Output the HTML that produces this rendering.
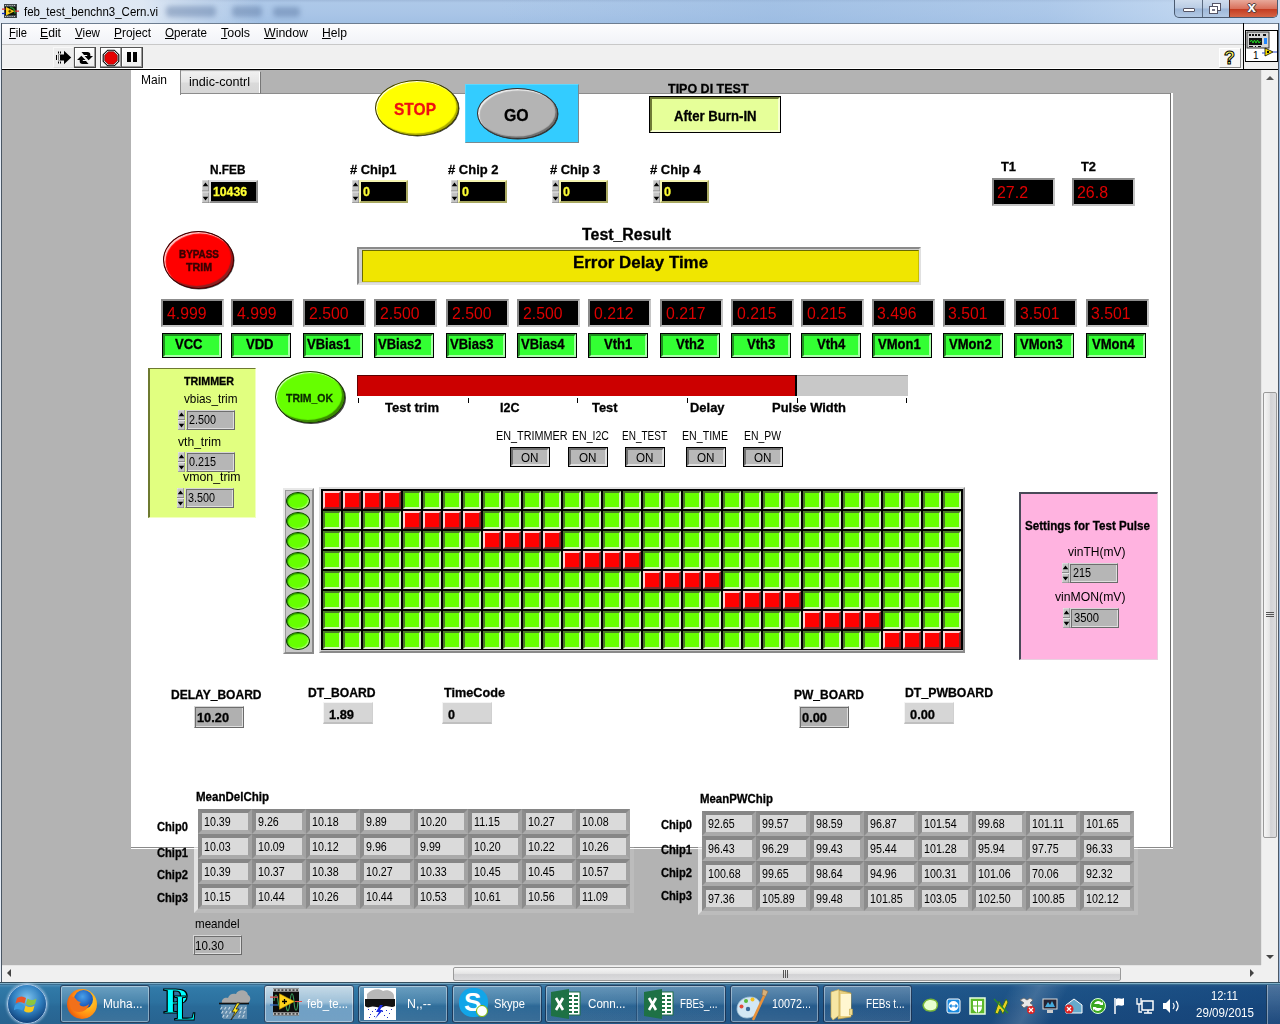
<!DOCTYPE html><html><head><meta charset="utf-8"><title>feb_test_benchn3_Cern.vi</title><style>
*{box-sizing:border-box;margin:0;padding:0}
html,body{width:1280px;height:1024px;overflow:hidden;background:#b3b3b3;font-family:"Liberation Sans",sans-serif;font-size:12px;color:#000}
.a{position:absolute}
.t{position:absolute;white-space:nowrap;line-height:1}
.b{font-weight:bold}
u{text-decoration:underline}
/* labview style frames */
.raised{border:2px solid;border-color:#dcdcdc #8a8a8a #8a8a8a #dcdcdc}
.sunk{border:1px solid;border-color:#d6d6d6 #6a6a6a #6a6a6a #d6d6d6;box-shadow:inset 1px 1px 0 #6e6e6e,inset -1px -1px 0 #dedede}
.spin{background:#c8c8c8;border:1px solid;border-color:#e8e8e8 #7d7d7d #7d7d7d #e8e8e8}
.spin i{position:absolute;left:0;width:100%;height:50%;display:block}
.spin:before{content:"";position:absolute;left:-.5px;top:2px;border:2.500px solid transparent;border-top:0;border-bottom:3.500px solid #000;width:0;height:0}
.spin:after{content:"";position:absolute;left:-.5px;bottom:2px;border:2.500px solid transparent;border-bottom:0;border-top:3.500px solid #000;width:0;height:0}
.spin b{position:absolute;left:0;right:0;top:50%;height:1px;background:#8a8a8a;margin-top:-1px;border-bottom:1px solid #eee;box-sizing:content-box}
.cell{position:absolute;width:18px;height:18px;border:2px solid}
.g{background:#66ff00;border-color:#4a7a2a #d8f0c8 #d8f0c8 #4a7a2a}
.r{background:#ff0000;border-color:#ffd0d0 #7a3030 #7a3030 #ffd0d0}
.led{position:absolute;width:24px;height:18px;border-radius:50%;background:#66ff00;border:1px solid #0a3a00;box-shadow:inset 1px 1px 1px #2c9a00, inset -1px -1px 1px #b8ff80}
.ind{position:absolute;width:63px;height:28px;background:#000;border:2px solid;border-color:#8c8c8c #c4c4c4 #c4c4c4 #8c8c8c;outline:0}
.lab{position:absolute;width:60px;height:25px;background:#33ff33;border:1px solid #000}
.lab:before{content:"";position:absolute;left:0;top:0;right:0;bottom:0;border:2px solid;border-color:#1f8f1f #a8ffa8 #a8ffa8 #1f8f1f}
.on{position:absolute;width:40px;height:20px;background:#b8b8b8;border:1px solid #000}
.on:before{content:"";position:absolute;left:0;top:0;right:0;bottom:0;border:2px solid;border-color:#6e6e6e #e2e2e2 #e2e2e2 #6e6e6e}
.acell{position:absolute;width:54px;height:25px;background:#dadada;border:4px solid;border-color:#868686 #a2a2a2 #aaaaaa #8c8c8c}
</style></head><body>
<div class="a " style="left:0px;top:0px;width:1280px;height:23px;background:linear-gradient(180deg,#9fb9da 0%,#adc8e8 12%,#a9c5e7 60%,#a2c0e4 100%)"></div>
<div class="a " style="left:500px;top:0px;width:780px;height:23px;background:linear-gradient(90deg,rgba(150,182,222,0) 0%,rgba(150,184,224,.45) 35%,rgba(175,203,236,.3) 70%,rgba(214,230,248,.75) 100%)"></div>
<div class="a " style="left:0px;top:0px;width:260px;height:23px;background:linear-gradient(90deg,rgba(226,234,244,1) 0%,rgba(224,233,244,.96) 55%,rgba(215,227,242,.7) 70%,rgba(200,218,240,0) 100%)"></div>
<div class="a " style="left:166px;top:6px;width:50px;height:11px;background:rgba(70,100,145,.38);filter:blur(2.5px);border-radius:4px"></div>
<div class="a " style="left:232px;top:6px;width:30px;height:11px;background:rgba(70,100,145,.38);filter:blur(2.5px);border-radius:4px"></div>
<div class="a " style="left:273px;top:7px;width:27px;height:10px;background:rgba(70,100,145,.38);filter:blur(2.5px);border-radius:4px"></div>
<svg class="a" style="left:1px;top:3px" width="19" height="16" viewBox="0 0 19 16"><rect x="3" y="1" width="13" height="14" fill="#3c4448"/><path d="M4 2.500h11M4 13.500h11" stroke="#c8c8c8" stroke-width="1.200" stroke-dasharray="1.200 1"/><rect x="4" y="4" width="11" height="8" fill="#0c1408"/><path d="M9 4.500c3 0 5 2 5 6" stroke="#2a8a2a" stroke-width="1.400" fill="none"/><path d="M5 4l8.500 4.300L5 12.500z" fill="#ffd21a"/><path d="M7.300 8.200h3M8.800 6.700v3" stroke="#3a3000" stroke-width="1"/><path d="M1 6.200h3.500M14 8.200h4" stroke="#e03030" stroke-width="1.300"/><path d="M1 10.500h3.500" stroke="#1030c0" stroke-width="1.300"/></svg>
<div class="t " style="left:23.7px;top:5.8px;font-size:12px;color:#000;transform:scaleX(0.956);transform-origin:0 0;">feb_test_benchn3_Cern.vi</div>
<div class="a" style="left:1174px;top:0;width:104px;height:18px;border:1px solid #4a5a70;border-top:0;border-radius:0 0 5px 5px;overflow:hidden;background:linear-gradient(180deg,#cfddee 0%,#b9cce4 48%,#9db7d8 52%,#b3c9e4 100%)"><div class="a" style="left:27px;top:0;width:1px;height:18px;background:#5a6a80"></div><div class="a" style="left:54px;top:0;width:49px;height:18px;border-left:1px solid #5a2a20;background:linear-gradient(180deg,#e8a99a 0%,#d9715c 48%,#c43d22 52%,#d86a4a 100%)"></div><div class="a" style="left:8px;top:8px;width:12px;height:4px;background:#fff;border:1px solid #556;border-radius:1px"></div><div class="a" style="left:37px;top:3px;width:9px;height:8px;background:#fff;border:1px solid #556"></div><div class="a" style="left:34px;top:6px;width:9px;height:8px;background:#fff;border:1px solid #556"></div><div class="a" style="left:37px;top:9px;width:3px;height:2px;background:#778"></div><div class="t b" style="left:72.500px;top:-1.500px;font-size:15px;color:#fff;text-shadow:0 0 1px #433,1px 0 0 #544,-1px 0 0 #544,0 1px 0 #544,0 -1px 0 #544">x</div></div>
<div class="a " style="left:0px;top:23px;width:1280px;height:22px;background:linear-gradient(180deg,#fdfdfe 0%,#f1f3f7 100%);border-top:1px solid #6d7d90;border-bottom:1px solid #c8c8c8"></div>
<div class="a " style="left:0px;top:45px;width:1280px;height:24px;background:#f0f0f0"></div>
<div class="a " style="left:0px;top:23px;width:2px;height:960px;background:#e6eef8;border-right:1px solid #4a5663"></div>
<div class="a " style="left:1278px;top:23px;width:2px;height:960px;background:#9db9dc;border-left:1px solid #4c5866"></div>
<div class="t" style="left:9px;top:25.7px;font-size:13px;transform:scaleX(0.859);transform-origin:0 0"><u>F</u>ile</div>
<div class="t" style="left:40px;top:25.7px;font-size:13px;transform:scaleX(0.937);transform-origin:0 0"><u>E</u>dit</div>
<div class="t" style="left:75px;top:25.7px;font-size:13px;transform:scaleX(0.895);transform-origin:0 0"><u>V</u>iew</div>
<div class="t" style="left:114px;top:25.7px;font-size:13px;transform:scaleX(0.914);transform-origin:0 0"><u>P</u>roject</div>
<div class="t" style="left:165px;top:25.7px;font-size:13px;transform:scaleX(0.894);transform-origin:0 0"><u>O</u>perate</div>
<div class="t" style="left:221px;top:25.7px;font-size:13px;transform:scaleX(0.956);transform-origin:0 0"><u>T</u>ools</div>
<div class="t" style="left:264px;top:25.7px;font-size:13px;transform:scaleX(0.952);transform-origin:0 0"><u>W</u>indow</div>
<div class="t" style="left:322px;top:25.7px;font-size:13px;transform:scaleX(0.935);transform-origin:0 0"><u>H</u>elp</div>
<div class="a " style="left:53px;top:47px;width:21px;height:21px;background:#ececec;border:1px solid;border-color:#f8f8f8 #dcdcdc #dcdcdc #f8f8f8"></div>
<svg class="a" style="left:54px;top:48px" width="20" height="20" viewBox="0 0 20 20"><path d="M4.500 6.500h5.500V2.800L17.200 9.500 10 16.200V12.500H4.500z" fill="#000"/><path d="M2.500 7v5M4.500 3.500v2M6.500 3.500v2M4.500 13.500v2M6.500 13.500v2" stroke="#000" stroke-width="1"/><path d="M5.500 6.500v6" stroke="#ececec" stroke-width="1"/></svg>
<div class="a " style="left:74px;top:47px;width:22px;height:21px;background:linear-gradient(180deg,#fdfdfd,#ececec);border:1px solid;border-color:#555 #444 #444 #555;box-shadow:inset -1px -1px 0 #9a9a9a,inset 1px 1px 0 #fff"></div>
<svg class="a" style="left:75px;top:48px" width="20" height="20" viewBox="0 0 20 20"><path d="M6.500 4h6c1.800 0 2.800 1 2.800 2.500V8H18l-4.300 4.300L9.500 8h2.700V7H9z" fill="#000"/><path d="M13.500 16h-6c-1.800 0-2.800-1-2.800-2.500V12H2l4.300-4.300L10.500 12H7.800v1H11z" fill="#000"/></svg>
<div class="a " style="left:100px;top:47px;width:22px;height:21px;background:linear-gradient(180deg,#fdfdfd,#ececec);border:1px solid;border-color:#555 #444 #444 #555;box-shadow:inset -1px -1px 0 #9a9a9a,inset 1px 1px 0 #fff"></div>
<svg class="a" style="left:102px;top:49px" width="18" height="18" viewBox="0 0 18 18"><path d="M5.700 1.200h6.600l4.500 4.500v6.600l-4.500 4.500H5.700l-4.500-4.500V5.700z" fill="#fff" stroke="#000" stroke-width="1.100"/><path d="M6.300 2.700h5.400l3.600 3.600v5.400l-3.600 3.600H6.300l-3.600-3.600V6.300z" fill="#e60000" stroke="#400" stroke-width=".6"/></svg>
<div class="a " style="left:121px;top:47px;width:22px;height:21px;background:linear-gradient(180deg,#fdfdfd,#ececec);border:1px solid;border-color:#555 #444 #444 #555;box-shadow:inset -1px -1px 0 #9a9a9a,inset 1px 1px 0 #fff"></div>
<div class="a " style="left:127px;top:52px;width:3.7px;height:10px;background:#000"></div>
<div class="a " style="left:133.3px;top:52px;width:3.7px;height:10px;background:#000"></div>
<div class="a " style="left:1219px;top:48px;width:22px;height:20px;background:#f6f6f6;border:1px solid;border-color:#fff #8a8a8a #8a8a8a #fff"></div>
<div class="t b" style="left:1224px;top:49px;font-size:18px;color:#ffff66;-webkit-text-stroke:1px #000">?</div>
<div class="a " style="left:1243px;top:23px;width:1px;height:46px;background:#000"></div>
<div class="a " style="left:1245px;top:30px;width:33px;height:32px;background:#fff;border:1px solid #000"></div>
<svg class="a" style="left:1246px;top:31px" width="31" height="30" viewBox="0 0 31 30"><rect x="1" y="1" width="22" height="16" fill="#d4d4d4" stroke="#333" stroke-width="1"/><rect x="3" y="7" width="13" height="7" fill="#111"/><path d="M4 11l1.500-2 1.500 3 1.500-3 1.500 3 1.500-3 1.500 3 1.500-2" stroke="#2d2" stroke-width="1" fill="none"/><path d="M3 4h2M6 4h2M9 4h2M12 4h2M17 4h3" stroke="#111" stroke-width="2"/><path d="M3 15.500h4M9 15.500h1M12 15.500h3" stroke="#111" stroke-width="1"/><rect x="18" y="7" width="3" height="6" fill="#28f"/><path d="M19 17l8 4-8 4z" fill="#ffe600" stroke="#000" stroke-width=".8"/><path d="M16 22h3M27 21h4" stroke="#24c" stroke-width="1"/><circle cx="22" cy="21" r="1.200" fill="#000"/></svg>
<div class="t " style="left:1253.0px;top:50.6px;font-size:10px;color:#000;">1</div>
<div class="a " style="left:2px;top:68px;width:1241px;height:1px;background:#fff"></div>
<div class="a " style="left:2px;top:69px;width:1276px;height:1px;background:#000"></div>
<div class="a " style="left:1170px;top:93px;width:3px;height:756px;background:#fff;border-left:1px solid #707070"></div>
<div class="a " style="left:131px;top:847px;width:1042px;height:2px;background:#fff;border-top:1px solid #8a8a8a"></div>
<div class="a " style="left:131px;top:93px;width:1039px;height:754px;background:#fff;border-top:1px solid #8c8c8c"></div>
<div class="a " style="left:180px;top:71px;width:81px;height:23px;background:linear-gradient(180deg,#f0f0f0 0%,#e6e6e6 45%,#dadada 55%,#d6d6d6 100%);border:1px solid;border-color:#e8e8e8 #777 #8c8c8c #8a8a8a;box-shadow:inset -1px 0 0 #fff"></div>
<div class="a " style="left:131px;top:70px;width:50px;height:25px;background:#fff;border-right:1px solid #8a8a8a"></div>
<div class="t " style="left:140.5px;top:73.6px;font-size:12.5px;color:#000;transform:scaleX(0.960);transform-origin:0 0;">Main</div>
<div class="t " style="left:189.4px;top:75.9px;font-size:12.5px;color:#000;transform:scaleX(1.009);transform-origin:0 0;">indic-contrl</div>
<div class="a" style="left:374.5px;top:80px;width:84px;height:56px;border-radius:50%;background:#ffff00;border:1px solid #3a3a00;box-shadow:inset 1px 1px 1px #fffff0,inset -1.500px -1.500px 1px #a8a800,.5px .5px 0 #444"></div>
<div class="t " style="left:394.4px;top:100.5px;font-size:17px;font-weight:bold;-webkit-text-stroke:.3px;color:#ee1111;transform:scaleX(0.913);transform-origin:0 0;">STOP</div>
<div class="a " style="left:465px;top:84px;width:114px;height:59px;background:#33ccff;border:1px solid;border-color:#5ad8ff #7a8a90 #7a8a90 #5ad8ff"></div>
<div class="a" style="left:476.5px;top:88.3px;width:81px;height:51px;border-radius:50%;background:#b4b4b4;border:1px solid #333;box-shadow:inset 1.500px 1.500px 1px #ececec,inset -1.500px -1.500px 1px #6e6e6e,.5px .5px 0 #333"></div>
<div class="t " style="left:504.4px;top:106.7px;font-size:17px;font-weight:bold;-webkit-text-stroke:.3px;color:#000;transform:scaleX(0.934);transform-origin:0 0;">GO</div>
<div class="t " style="left:668.0px;top:81.6px;font-size:13px;font-weight:bold;-webkit-text-stroke:.3px;color:#000;transform:scaleX(0.961);transform-origin:0 0;">TIPO DI TEST</div>
<div class="a " style="left:649px;top:96px;width:132px;height:37px;background:#e6ff99;border:1px solid #000"></div>
<div class="a " style="left:650px;top:97px;width:130px;height:35px;border:2px solid;border-color:#6e7a36 #f6ffd0 #f6ffd0 #6e7a36"></div>
<div class="t " style="left:673.5px;top:108.7px;font-size:14px;font-weight:bold;-webkit-text-stroke:.3px;color:#000;transform:scaleX(0.939);transform-origin:0 0;">After Burn-IN</div>
<div class="t " style="left:209.5px;top:162.6px;font-size:13px;font-weight:bold;-webkit-text-stroke:.3px;color:#000;transform:scaleX(0.910);transform-origin:0 0;">N.FEB</div>
<svg class="a" style="left:201.5px;top:180px" width="7" height="23" viewBox="0 0 7 23"><rect x="0" y="0" width="7" height="23" fill="#c4c4c4"/><path d="M0 23V0H7" stroke="#ececec" fill="none"/><path d="M7 0V23H0" stroke="#7a7a7a" fill="none"/><path d="M0 11H7" stroke="#8a8a8a" stroke-width="1"/><path d="M0 12H7" stroke="#e8e8e8" stroke-width="1"/><path d="M3.500 2.500L6.300 6.300H0.700z" fill="#000"/><path d="M3.500 20.5L6.300 16.7H0.700z" fill="#000"/></svg>
<div class="a raised" style="left:209px;top:180px;width:49px;height:23px;background:#000;"></div>
<div class="t " style="left:212.5px;top:184.8px;font-size:13px;font-weight:bold;-webkit-text-stroke:.3px;color:#ffff33;transform:scaleX(0.940);transform-origin:0 0;">10436</div>
<div class="t " style="left:349.6px;top:162.6px;font-size:13px;font-weight:bold;-webkit-text-stroke:.3px;color:#000;transform:scaleX(0.990);transform-origin:0 0;"># Chip1</div>
<svg class="a" style="left:351.5px;top:180px" width="7" height="23" viewBox="0 0 7 23"><rect x="0" y="0" width="7" height="23" fill="#c4c4c4"/><path d="M0 23V0H7" stroke="#ececec" fill="none"/><path d="M7 0V23H0" stroke="#7a7a7a" fill="none"/><path d="M0 11H7" stroke="#8a8a8a" stroke-width="1"/><path d="M0 12H7" stroke="#e8e8e8" stroke-width="1"/><path d="M3.500 2.500L6.300 6.300H0.700z" fill="#000"/><path d="M3.500 20.5L6.300 16.7H0.700z" fill="#000"/></svg>
<div class="a raised" style="left:359px;top:180px;width:49px;height:23px;background:#000;border-color:#f4f4b0 #a8a860 #a8a860 #f4f4b0;"></div>
<div class="t " style="left:362.5px;top:184.8px;font-size:13px;font-weight:bold;-webkit-text-stroke:.3px;color:#ffff33;transform:scaleX(0.968);transform-origin:0 0;">0</div>
<div class="t " style="left:448.3px;top:162.6px;font-size:13px;font-weight:bold;-webkit-text-stroke:.3px;color:#000;transform:scaleX(0.999);transform-origin:0 0;"># Chip 2</div>
<svg class="a" style="left:450.5px;top:180px" width="7" height="23" viewBox="0 0 7 23"><rect x="0" y="0" width="7" height="23" fill="#c4c4c4"/><path d="M0 23V0H7" stroke="#ececec" fill="none"/><path d="M7 0V23H0" stroke="#7a7a7a" fill="none"/><path d="M0 11H7" stroke="#8a8a8a" stroke-width="1"/><path d="M0 12H7" stroke="#e8e8e8" stroke-width="1"/><path d="M3.500 2.500L6.300 6.300H0.700z" fill="#000"/><path d="M3.500 20.5L6.300 16.7H0.700z" fill="#000"/></svg>
<div class="a raised" style="left:458px;top:180px;width:49px;height:23px;background:#000;border-color:#f4f4b0 #a8a860 #a8a860 #f4f4b0;"></div>
<div class="t " style="left:461.5px;top:184.8px;font-size:13px;font-weight:bold;-webkit-text-stroke:.3px;color:#ffff33;transform:scaleX(0.968);transform-origin:0 0;">0</div>
<div class="t " style="left:549.6px;top:162.6px;font-size:13px;font-weight:bold;-webkit-text-stroke:.3px;color:#000;transform:scaleX(0.993);transform-origin:0 0;"># Chip 3</div>
<svg class="a" style="left:551.5px;top:180px" width="7" height="23" viewBox="0 0 7 23"><rect x="0" y="0" width="7" height="23" fill="#c4c4c4"/><path d="M0 23V0H7" stroke="#ececec" fill="none"/><path d="M7 0V23H0" stroke="#7a7a7a" fill="none"/><path d="M0 11H7" stroke="#8a8a8a" stroke-width="1"/><path d="M0 12H7" stroke="#e8e8e8" stroke-width="1"/><path d="M3.500 2.500L6.300 6.300H0.700z" fill="#000"/><path d="M3.500 20.5L6.300 16.7H0.700z" fill="#000"/></svg>
<div class="a raised" style="left:559px;top:180px;width:49px;height:23px;background:#000;border-color:#f4f4b0 #a8a860 #a8a860 #f4f4b0;"></div>
<div class="t " style="left:562.5px;top:184.8px;font-size:13px;font-weight:bold;-webkit-text-stroke:.3px;color:#ffff33;transform:scaleX(0.968);transform-origin:0 0;">0</div>
<div class="t " style="left:650.4px;top:162.6px;font-size:13px;font-weight:bold;-webkit-text-stroke:.3px;color:#000;transform:scaleX(1.001);transform-origin:0 0;"># Chip 4</div>
<svg class="a" style="left:652.5px;top:180px" width="7" height="23" viewBox="0 0 7 23"><rect x="0" y="0" width="7" height="23" fill="#c4c4c4"/><path d="M0 23V0H7" stroke="#ececec" fill="none"/><path d="M7 0V23H0" stroke="#7a7a7a" fill="none"/><path d="M0 11H7" stroke="#8a8a8a" stroke-width="1"/><path d="M0 12H7" stroke="#e8e8e8" stroke-width="1"/><path d="M3.500 2.500L6.300 6.300H0.700z" fill="#000"/><path d="M3.500 20.5L6.300 16.7H0.700z" fill="#000"/></svg>
<div class="a raised" style="left:660px;top:180px;width:49px;height:23px;background:#000;border-color:#f4f4b0 #a8a860 #a8a860 #f4f4b0;"></div>
<div class="t " style="left:663.5px;top:184.8px;font-size:13px;font-weight:bold;-webkit-text-stroke:.3px;color:#ffff33;transform:scaleX(0.968);transform-origin:0 0;">0</div>
<div class="t " style="left:1001.0px;top:159.8px;font-size:13px;font-weight:bold;-webkit-text-stroke:.3px;color:#000;transform:scaleX(0.989);transform-origin:0 0;">T1</div>
<div class="t " style="left:1081.0px;top:159.8px;font-size:13px;font-weight:bold;-webkit-text-stroke:.3px;color:#000;transform:scaleX(0.989);transform-origin:0 0;">T2</div>
<div class="a ind" style="left:992px;top:178px;width:63px;height:28px;"></div>
<div class="t " style="left:997.0px;top:184.2px;font-size:17px;color:#e00000;transform:scaleX(0.937);transform-origin:0 0;">27.2</div>
<div class="a ind" style="left:1072px;top:178px;width:63px;height:28px;"></div>
<div class="t " style="left:1077.0px;top:184.2px;font-size:17px;color:#e00000;transform:scaleX(0.937);transform-origin:0 0;">26.8</div>
<div class="a" style="left:163px;top:231px;width:71px;height:58px;border-radius:50%;background:#ff0000;border:1px solid #3a0000;box-shadow:inset 1.500px 1.500px 1px #ffc8c8,inset -2px -2px 1px #8a2020,.5px .5px 0 #555"></div>
<div class="t " style="left:179.0px;top:248.6px;font-size:11px;font-weight:bold;color:#3a0000;transform:scaleX(0.900);transform-origin:0 0;-webkit-text-stroke:.45px #3a0000;">BYPASS</div>
<div class="t " style="left:186.0px;top:261.6px;font-size:11px;font-weight:bold;color:#3a0000;transform:scaleX(0.967);transform-origin:0 0;-webkit-text-stroke:.45px #3a0000;">TRIM</div>
<div class="t " style="left:582.0px;top:226.7px;font-size:16px;font-weight:bold;-webkit-text-stroke:.3px;color:#000;transform:scaleX(0.994);transform-origin:0 0;">Test_Result</div>
<div class="a " style="left:357px;top:247px;width:564px;height:38px;background:#d0d0d0;border:2px solid;border-color:#8a8a8a #e0e0e0 #e0e0e0 #8a8a8a"></div>
<div class="a " style="left:362px;top:249.5px;width:557px;height:32px;background:#f0e600;border:1px solid;border-color:#6a6a00 #c8c000 #c8c000 #6a6a00"></div>
<div class="t " style="left:573.0px;top:254.7px;font-size:16px;font-weight:bold;-webkit-text-stroke:.3px;color:#000;transform:scaleX(1.057);transform-origin:0 0;">Error Delay Time</div>
<div class="ind" style="left:161px;top:299px"></div>
<div class="t " style="left:166.5px;top:304.7px;font-size:17px;color:#dc0000;transform:scaleX(0.928);transform-origin:0 0;">4.999</div>
<div class="lab" style="left:162px;top:333px"></div>
<div class="t " style="left:174.8px;top:336.7px;font-size:14px;font-weight:bold;-webkit-text-stroke:.3px;color:#000;transform:scaleX(0.930);transform-origin:0 0;">VCC</div>
<div class="ind" style="left:231px;top:299px"></div>
<div class="t " style="left:236.5px;top:304.7px;font-size:17px;color:#dc0000;transform:scaleX(0.928);transform-origin:0 0;">4.999</div>
<div class="lab" style="left:231px;top:333px"></div>
<div class="t " style="left:246.3px;top:336.7px;font-size:14px;font-weight:bold;-webkit-text-stroke:.3px;color:#000;transform:scaleX(0.930);transform-origin:0 0;">VDD</div>
<div class="ind" style="left:303px;top:299px"></div>
<div class="t " style="left:308.5px;top:304.7px;font-size:17px;color:#dc0000;transform:scaleX(0.928);transform-origin:0 0;">2.500</div>
<div class="lab" style="left:303px;top:333px"></div>
<div class="t " style="left:306.8px;top:336.7px;font-size:14px;font-weight:bold;-webkit-text-stroke:.3px;color:#000;transform:scaleX(0.930);transform-origin:0 0;">VBias1</div>
<div class="ind" style="left:374px;top:299px"></div>
<div class="t " style="left:379.5px;top:304.7px;font-size:17px;color:#dc0000;transform:scaleX(0.928);transform-origin:0 0;">2.500</div>
<div class="lab" style="left:374px;top:333px"></div>
<div class="t " style="left:377.8px;top:336.7px;font-size:14px;font-weight:bold;-webkit-text-stroke:.3px;color:#000;transform:scaleX(0.930);transform-origin:0 0;">VBias2</div>
<div class="ind" style="left:446px;top:299px"></div>
<div class="t " style="left:451.5px;top:304.7px;font-size:17px;color:#dc0000;transform:scaleX(0.928);transform-origin:0 0;">2.500</div>
<div class="lab" style="left:446px;top:333px"></div>
<div class="t " style="left:449.8px;top:336.7px;font-size:14px;font-weight:bold;-webkit-text-stroke:.3px;color:#000;transform:scaleX(0.930);transform-origin:0 0;">VBias3</div>
<div class="ind" style="left:517px;top:299px"></div>
<div class="t " style="left:522.5px;top:304.7px;font-size:17px;color:#dc0000;transform:scaleX(0.928);transform-origin:0 0;">2.500</div>
<div class="lab" style="left:517px;top:333px"></div>
<div class="t " style="left:520.8px;top:336.7px;font-size:14px;font-weight:bold;-webkit-text-stroke:.3px;color:#000;transform:scaleX(0.930);transform-origin:0 0;">VBias4</div>
<div class="ind" style="left:588px;top:299px"></div>
<div class="t " style="left:593.5px;top:304.7px;font-size:17px;color:#dc0000;transform:scaleX(0.928);transform-origin:0 0;">0.212</div>
<div class="lab" style="left:588px;top:333px"></div>
<div class="t " style="left:604.4px;top:336.7px;font-size:14px;font-weight:bold;-webkit-text-stroke:.3px;color:#000;transform:scaleX(0.930);transform-origin:0 0;">Vth1</div>
<div class="ind" style="left:660px;top:299px"></div>
<div class="t " style="left:665.5px;top:304.7px;font-size:17px;color:#dc0000;transform:scaleX(0.928);transform-origin:0 0;">0.217</div>
<div class="lab" style="left:660px;top:333px"></div>
<div class="t " style="left:676.4px;top:336.7px;font-size:14px;font-weight:bold;-webkit-text-stroke:.3px;color:#000;transform:scaleX(0.930);transform-origin:0 0;">Vth2</div>
<div class="ind" style="left:731px;top:299px"></div>
<div class="t " style="left:736.5px;top:304.7px;font-size:17px;color:#dc0000;transform:scaleX(0.928);transform-origin:0 0;">0.215</div>
<div class="lab" style="left:731px;top:333px"></div>
<div class="t " style="left:747.4px;top:336.7px;font-size:14px;font-weight:bold;-webkit-text-stroke:.3px;color:#000;transform:scaleX(0.930);transform-origin:0 0;">Vth3</div>
<div class="ind" style="left:801px;top:299px"></div>
<div class="t " style="left:806.5px;top:304.7px;font-size:17px;color:#dc0000;transform:scaleX(0.928);transform-origin:0 0;">0.215</div>
<div class="lab" style="left:801px;top:333px"></div>
<div class="t " style="left:817.4px;top:336.7px;font-size:14px;font-weight:bold;-webkit-text-stroke:.3px;color:#000;transform:scaleX(0.930);transform-origin:0 0;">Vth4</div>
<div class="ind" style="left:871.5px;top:299px"></div>
<div class="t " style="left:877.0px;top:304.7px;font-size:17px;color:#dc0000;transform:scaleX(0.928);transform-origin:0 0;">3.496</div>
<div class="lab" style="left:871.5px;top:333px"></div>
<div class="t " style="left:877.7px;top:336.7px;font-size:14px;font-weight:bold;-webkit-text-stroke:.3px;color:#000;transform:scaleX(0.930);transform-origin:0 0;">VMon1</div>
<div class="ind" style="left:942.5px;top:299px"></div>
<div class="t " style="left:948.0px;top:304.7px;font-size:17px;color:#dc0000;transform:scaleX(0.928);transform-origin:0 0;">3.501</div>
<div class="lab" style="left:942.5px;top:333px"></div>
<div class="t " style="left:948.7px;top:336.7px;font-size:14px;font-weight:bold;-webkit-text-stroke:.3px;color:#000;transform:scaleX(0.930);transform-origin:0 0;">VMon2</div>
<div class="ind" style="left:1014px;top:299px"></div>
<div class="t " style="left:1019.5px;top:304.7px;font-size:17px;color:#dc0000;transform:scaleX(0.928);transform-origin:0 0;">3.501</div>
<div class="lab" style="left:1014px;top:333px"></div>
<div class="t " style="left:1020.2px;top:336.7px;font-size:14px;font-weight:bold;-webkit-text-stroke:.3px;color:#000;transform:scaleX(0.930);transform-origin:0 0;">VMon3</div>
<div class="ind" style="left:1085.5px;top:299px"></div>
<div class="t " style="left:1091.0px;top:304.7px;font-size:17px;color:#dc0000;transform:scaleX(0.928);transform-origin:0 0;">3.501</div>
<div class="lab" style="left:1085.5px;top:333px"></div>
<div class="t " style="left:1091.7px;top:336.7px;font-size:14px;font-weight:bold;-webkit-text-stroke:.3px;color:#000;transform:scaleX(0.930);transform-origin:0 0;">VMon4</div>
<div class="a " style="left:148px;top:368px;width:108px;height:150px;background:#e1ff80;border:1px solid;border-color:#6e7a30 #f2ffc0 #f2ffc0 #6e7a30;border-left-width:2px"></div>
<div class="t " style="left:184.0px;top:375.6px;font-size:11px;font-weight:bold;-webkit-text-stroke:.3px;color:#000;transform:scaleX(0.974);transform-origin:0 0;">TRIMMER</div>
<div class="t " style="left:184.0px;top:392.0px;font-size:13px;color:#000;transform:scaleX(0.903);transform-origin:0 0;">vbias_trim</div>
<svg class="a" style="left:178px;top:409.5px" width="7" height="20" viewBox="0 0 7 20"><rect x="0" y="0" width="7" height="20" fill="#c4c4c4"/><path d="M0 20V0H7" stroke="#ececec" fill="none"/><path d="M7 0V20H0" stroke="#7a7a7a" fill="none"/><path d="M0 9.5H7" stroke="#8a8a8a" stroke-width="1"/><path d="M0 10.5H7" stroke="#e8e8e8" stroke-width="1"/><path d="M3.500 2.500L6.300 6.300H0.700z" fill="#000"/><path d="M3.500 17.5L6.300 13.7H0.700z" fill="#000"/></svg>
<div class="a sunk" style="left:185.5px;top:409.5px;width:49px;height:20px;background:#b6b6b6;"></div>
<div class="t " style="left:189.0px;top:412.8px;font-size:13px;color:#000;transform:scaleX(0.830);transform-origin:0 0;">2.500</div>
<div class="t " style="left:177.5px;top:434.5px;font-size:13px;color:#000;transform:scaleX(0.930);transform-origin:0 0;">vth_trim</div>
<svg class="a" style="left:178px;top:451.5px" width="7" height="20" viewBox="0 0 7 20"><rect x="0" y="0" width="7" height="20" fill="#c4c4c4"/><path d="M0 20V0H7" stroke="#ececec" fill="none"/><path d="M7 0V20H0" stroke="#7a7a7a" fill="none"/><path d="M0 9.5H7" stroke="#8a8a8a" stroke-width="1"/><path d="M0 10.5H7" stroke="#e8e8e8" stroke-width="1"/><path d="M3.500 2.500L6.300 6.300H0.700z" fill="#000"/><path d="M3.500 17.5L6.300 13.7H0.700z" fill="#000"/></svg>
<div class="a sunk" style="left:185.5px;top:451.5px;width:49px;height:20px;background:#b6b6b6;"></div>
<div class="t " style="left:189.0px;top:454.8px;font-size:13px;color:#000;transform:scaleX(0.830);transform-origin:0 0;">0.215</div>
<div class="t " style="left:183.0px;top:469.5px;font-size:13px;color:#000;transform:scaleX(0.948);transform-origin:0 0;">vmon_trim</div>
<svg class="a" style="left:177px;top:487.5px" width="7" height="20" viewBox="0 0 7 20"><rect x="0" y="0" width="7" height="20" fill="#c4c4c4"/><path d="M0 20V0H7" stroke="#ececec" fill="none"/><path d="M7 0V20H0" stroke="#7a7a7a" fill="none"/><path d="M0 9.5H7" stroke="#8a8a8a" stroke-width="1"/><path d="M0 10.5H7" stroke="#e8e8e8" stroke-width="1"/><path d="M3.500 2.500L6.300 6.300H0.700z" fill="#000"/><path d="M3.500 17.5L6.300 13.7H0.700z" fill="#000"/></svg>
<div class="a sunk" style="left:184.5px;top:487.5px;width:49px;height:20px;background:#b6b6b6;"></div>
<div class="t " style="left:188.0px;top:490.8px;font-size:13px;color:#000;transform:scaleX(0.830);transform-origin:0 0;">3.500</div>
<div class="a" style="left:275px;top:371px;width:70px;height:52px;border-radius:50%;background:#66ff00;border:1px solid #1a3a00;box-shadow:inset 1px 1px 1px #d8ffc0,inset -2px -2px 1px #3a8a00,1px 1px 0 #444"></div>
<div class="t " style="left:286.0px;top:392.6px;font-size:11px;font-weight:bold;-webkit-text-stroke:.3px;color:#0a2a00;transform:scaleX(0.949);transform-origin:0 0;">TRIM_OK</div>
<div class="a " style="left:357px;top:375px;width:551px;height:21px;background:#c8c8c8;border-top:1px solid #9a9a9a"></div>
<div class="a " style="left:357px;top:375px;width:439px;height:21px;background:#cc0000;border-top:1px solid #5a0000;border-left:1px solid #6a0000"></div>
<div class="a " style="left:795px;top:375px;width:2px;height:21px;background:#000"></div>
<div class="a " style="left:358px;top:398px;width:1px;height:5px;background:#000"></div>
<div class="a " style="left:468px;top:398px;width:1px;height:5px;background:#000"></div>
<div class="a " style="left:577px;top:398px;width:1px;height:5px;background:#000"></div>
<div class="a " style="left:687px;top:398px;width:1px;height:5px;background:#000"></div>
<div class="a " style="left:797px;top:398px;width:1px;height:5px;background:#000"></div>
<div class="a " style="left:906px;top:398px;width:1px;height:5px;background:#000"></div>
<div class="t " style="left:385.0px;top:401.1px;font-size:13px;font-weight:bold;-webkit-text-stroke:.3px;color:#000;transform:scaleX(1.001);transform-origin:0 0;">Test trim</div>
<div class="t " style="left:499.5px;top:401.1px;font-size:13px;font-weight:bold;-webkit-text-stroke:.3px;color:#000;transform:scaleX(0.964);transform-origin:0 0;">I2C</div>
<div class="t " style="left:591.7px;top:401.1px;font-size:13px;font-weight:bold;-webkit-text-stroke:.3px;color:#000;transform:scaleX(0.990);transform-origin:0 0;">Test</div>
<div class="t " style="left:689.7px;top:401.1px;font-size:13px;font-weight:bold;-webkit-text-stroke:.3px;color:#000;transform:scaleX(0.995);transform-origin:0 0;">Delay</div>
<div class="t " style="left:772.0px;top:401.1px;font-size:13px;font-weight:bold;-webkit-text-stroke:.3px;color:#000;transform:scaleX(0.996);transform-origin:0 0;">Pulse Width</div>
<div class="t " style="left:496.0px;top:429.9px;font-size:12.5px;color:#000;transform:scaleX(0.865);transform-origin:0 0;">EN_TRIMMER</div>
<div class="on" style="left:510px;top:447px"></div>
<div class="t " style="left:520.6px;top:452.3px;font-size:12.5px;color:#000;transform:scaleX(0.933);transform-origin:0 0;">ON</div>
<div class="t " style="left:572.0px;top:429.9px;font-size:12.5px;color:#000;transform:scaleX(0.845);transform-origin:0 0;">EN_I2C</div>
<div class="on" style="left:568px;top:447px"></div>
<div class="t " style="left:578.6px;top:452.3px;font-size:12.5px;color:#000;transform:scaleX(0.933);transform-origin:0 0;">ON</div>
<div class="t " style="left:621.6px;top:429.9px;font-size:12.5px;color:#000;transform:scaleX(0.800);transform-origin:0 0;">EN_TEST</div>
<div class="on" style="left:625px;top:447px"></div>
<div class="t " style="left:635.6px;top:452.3px;font-size:12.5px;color:#000;transform:scaleX(0.933);transform-origin:0 0;">ON</div>
<div class="t " style="left:682.0px;top:429.9px;font-size:12.5px;color:#000;transform:scaleX(0.849);transform-origin:0 0;">EN_TIME</div>
<div class="on" style="left:686px;top:447px"></div>
<div class="t " style="left:696.6px;top:452.3px;font-size:12.5px;color:#000;transform:scaleX(0.933);transform-origin:0 0;">ON</div>
<div class="t " style="left:743.7px;top:429.9px;font-size:12.5px;color:#000;transform:scaleX(0.832);transform-origin:0 0;">EN_PW</div>
<div class="on" style="left:743px;top:447px"></div>
<div class="t " style="left:753.6px;top:452.3px;font-size:12.5px;color:#000;transform:scaleX(0.933);transform-origin:0 0;">ON</div>
<div class="a " style="left:283px;top:488px;width:31px;height:166px;background:#c8c8c8;border:2px solid;border-color:#e8e8e8 #8a8a8a #8a8a8a #e8e8e8;box-shadow:inset 1px 1px 0 #9a9a9a"></div>
<div class="led" style="left:286px;top:492px"></div>
<div class="led" style="left:286px;top:512px"></div>
<div class="led" style="left:286px;top:532px"></div>
<div class="led" style="left:286px;top:552px"></div>
<div class="led" style="left:286px;top:572px"></div>
<div class="led" style="left:286px;top:592px"></div>
<div class="led" style="left:286px;top:612px"></div>
<div class="led" style="left:286px;top:632px"></div>
<div class="a " style="left:319px;top:487px;width:646px;height:166px;background:#c8c8c8;border:2px solid;border-color:#e0e0e0 #8a8a8a #8a8a8a #e0e0e0"></div>
<div class="a " style="left:321px;top:489px;width:642px;height:161px;background:#000"></div>
<i class="cell r" style="left:323px;top:491px"></i><i class="cell r" style="left:343px;top:491px"></i><i class="cell r" style="left:363px;top:491px"></i><i class="cell r" style="left:383px;top:491px"></i><i class="cell g" style="left:403px;top:491px"></i><i class="cell g" style="left:423px;top:491px"></i><i class="cell g" style="left:443px;top:491px"></i><i class="cell g" style="left:463px;top:491px"></i><i class="cell g" style="left:483px;top:491px"></i><i class="cell g" style="left:503px;top:491px"></i><i class="cell g" style="left:523px;top:491px"></i><i class="cell g" style="left:543px;top:491px"></i><i class="cell g" style="left:563px;top:491px"></i><i class="cell g" style="left:583px;top:491px"></i><i class="cell g" style="left:603px;top:491px"></i><i class="cell g" style="left:623px;top:491px"></i><i class="cell g" style="left:643px;top:491px"></i><i class="cell g" style="left:663px;top:491px"></i><i class="cell g" style="left:683px;top:491px"></i><i class="cell g" style="left:703px;top:491px"></i><i class="cell g" style="left:723px;top:491px"></i><i class="cell g" style="left:743px;top:491px"></i><i class="cell g" style="left:763px;top:491px"></i><i class="cell g" style="left:783px;top:491px"></i><i class="cell g" style="left:803px;top:491px"></i><i class="cell g" style="left:823px;top:491px"></i><i class="cell g" style="left:843px;top:491px"></i><i class="cell g" style="left:863px;top:491px"></i><i class="cell g" style="left:883px;top:491px"></i><i class="cell g" style="left:903px;top:491px"></i><i class="cell g" style="left:923px;top:491px"></i><i class="cell g" style="left:943px;top:491px"></i>
<i class="cell g" style="left:323px;top:511px"></i><i class="cell g" style="left:343px;top:511px"></i><i class="cell g" style="left:363px;top:511px"></i><i class="cell g" style="left:383px;top:511px"></i><i class="cell r" style="left:403px;top:511px"></i><i class="cell r" style="left:423px;top:511px"></i><i class="cell r" style="left:443px;top:511px"></i><i class="cell r" style="left:463px;top:511px"></i><i class="cell g" style="left:483px;top:511px"></i><i class="cell g" style="left:503px;top:511px"></i><i class="cell g" style="left:523px;top:511px"></i><i class="cell g" style="left:543px;top:511px"></i><i class="cell g" style="left:563px;top:511px"></i><i class="cell g" style="left:583px;top:511px"></i><i class="cell g" style="left:603px;top:511px"></i><i class="cell g" style="left:623px;top:511px"></i><i class="cell g" style="left:643px;top:511px"></i><i class="cell g" style="left:663px;top:511px"></i><i class="cell g" style="left:683px;top:511px"></i><i class="cell g" style="left:703px;top:511px"></i><i class="cell g" style="left:723px;top:511px"></i><i class="cell g" style="left:743px;top:511px"></i><i class="cell g" style="left:763px;top:511px"></i><i class="cell g" style="left:783px;top:511px"></i><i class="cell g" style="left:803px;top:511px"></i><i class="cell g" style="left:823px;top:511px"></i><i class="cell g" style="left:843px;top:511px"></i><i class="cell g" style="left:863px;top:511px"></i><i class="cell g" style="left:883px;top:511px"></i><i class="cell g" style="left:903px;top:511px"></i><i class="cell g" style="left:923px;top:511px"></i><i class="cell g" style="left:943px;top:511px"></i>
<i class="cell g" style="left:323px;top:531px"></i><i class="cell g" style="left:343px;top:531px"></i><i class="cell g" style="left:363px;top:531px"></i><i class="cell g" style="left:383px;top:531px"></i><i class="cell g" style="left:403px;top:531px"></i><i class="cell g" style="left:423px;top:531px"></i><i class="cell g" style="left:443px;top:531px"></i><i class="cell g" style="left:463px;top:531px"></i><i class="cell r" style="left:483px;top:531px"></i><i class="cell r" style="left:503px;top:531px"></i><i class="cell r" style="left:523px;top:531px"></i><i class="cell r" style="left:543px;top:531px"></i><i class="cell g" style="left:563px;top:531px"></i><i class="cell g" style="left:583px;top:531px"></i><i class="cell g" style="left:603px;top:531px"></i><i class="cell g" style="left:623px;top:531px"></i><i class="cell g" style="left:643px;top:531px"></i><i class="cell g" style="left:663px;top:531px"></i><i class="cell g" style="left:683px;top:531px"></i><i class="cell g" style="left:703px;top:531px"></i><i class="cell g" style="left:723px;top:531px"></i><i class="cell g" style="left:743px;top:531px"></i><i class="cell g" style="left:763px;top:531px"></i><i class="cell g" style="left:783px;top:531px"></i><i class="cell g" style="left:803px;top:531px"></i><i class="cell g" style="left:823px;top:531px"></i><i class="cell g" style="left:843px;top:531px"></i><i class="cell g" style="left:863px;top:531px"></i><i class="cell g" style="left:883px;top:531px"></i><i class="cell g" style="left:903px;top:531px"></i><i class="cell g" style="left:923px;top:531px"></i><i class="cell g" style="left:943px;top:531px"></i>
<i class="cell g" style="left:323px;top:551px"></i><i class="cell g" style="left:343px;top:551px"></i><i class="cell g" style="left:363px;top:551px"></i><i class="cell g" style="left:383px;top:551px"></i><i class="cell g" style="left:403px;top:551px"></i><i class="cell g" style="left:423px;top:551px"></i><i class="cell g" style="left:443px;top:551px"></i><i class="cell g" style="left:463px;top:551px"></i><i class="cell g" style="left:483px;top:551px"></i><i class="cell g" style="left:503px;top:551px"></i><i class="cell g" style="left:523px;top:551px"></i><i class="cell g" style="left:543px;top:551px"></i><i class="cell r" style="left:563px;top:551px"></i><i class="cell r" style="left:583px;top:551px"></i><i class="cell r" style="left:603px;top:551px"></i><i class="cell r" style="left:623px;top:551px"></i><i class="cell g" style="left:643px;top:551px"></i><i class="cell g" style="left:663px;top:551px"></i><i class="cell g" style="left:683px;top:551px"></i><i class="cell g" style="left:703px;top:551px"></i><i class="cell g" style="left:723px;top:551px"></i><i class="cell g" style="left:743px;top:551px"></i><i class="cell g" style="left:763px;top:551px"></i><i class="cell g" style="left:783px;top:551px"></i><i class="cell g" style="left:803px;top:551px"></i><i class="cell g" style="left:823px;top:551px"></i><i class="cell g" style="left:843px;top:551px"></i><i class="cell g" style="left:863px;top:551px"></i><i class="cell g" style="left:883px;top:551px"></i><i class="cell g" style="left:903px;top:551px"></i><i class="cell g" style="left:923px;top:551px"></i><i class="cell g" style="left:943px;top:551px"></i>
<i class="cell g" style="left:323px;top:571px"></i><i class="cell g" style="left:343px;top:571px"></i><i class="cell g" style="left:363px;top:571px"></i><i class="cell g" style="left:383px;top:571px"></i><i class="cell g" style="left:403px;top:571px"></i><i class="cell g" style="left:423px;top:571px"></i><i class="cell g" style="left:443px;top:571px"></i><i class="cell g" style="left:463px;top:571px"></i><i class="cell g" style="left:483px;top:571px"></i><i class="cell g" style="left:503px;top:571px"></i><i class="cell g" style="left:523px;top:571px"></i><i class="cell g" style="left:543px;top:571px"></i><i class="cell g" style="left:563px;top:571px"></i><i class="cell g" style="left:583px;top:571px"></i><i class="cell g" style="left:603px;top:571px"></i><i class="cell g" style="left:623px;top:571px"></i><i class="cell r" style="left:643px;top:571px"></i><i class="cell r" style="left:663px;top:571px"></i><i class="cell r" style="left:683px;top:571px"></i><i class="cell r" style="left:703px;top:571px"></i><i class="cell g" style="left:723px;top:571px"></i><i class="cell g" style="left:743px;top:571px"></i><i class="cell g" style="left:763px;top:571px"></i><i class="cell g" style="left:783px;top:571px"></i><i class="cell g" style="left:803px;top:571px"></i><i class="cell g" style="left:823px;top:571px"></i><i class="cell g" style="left:843px;top:571px"></i><i class="cell g" style="left:863px;top:571px"></i><i class="cell g" style="left:883px;top:571px"></i><i class="cell g" style="left:903px;top:571px"></i><i class="cell g" style="left:923px;top:571px"></i><i class="cell g" style="left:943px;top:571px"></i>
<i class="cell g" style="left:323px;top:591px"></i><i class="cell g" style="left:343px;top:591px"></i><i class="cell g" style="left:363px;top:591px"></i><i class="cell g" style="left:383px;top:591px"></i><i class="cell g" style="left:403px;top:591px"></i><i class="cell g" style="left:423px;top:591px"></i><i class="cell g" style="left:443px;top:591px"></i><i class="cell g" style="left:463px;top:591px"></i><i class="cell g" style="left:483px;top:591px"></i><i class="cell g" style="left:503px;top:591px"></i><i class="cell g" style="left:523px;top:591px"></i><i class="cell g" style="left:543px;top:591px"></i><i class="cell g" style="left:563px;top:591px"></i><i class="cell g" style="left:583px;top:591px"></i><i class="cell g" style="left:603px;top:591px"></i><i class="cell g" style="left:623px;top:591px"></i><i class="cell g" style="left:643px;top:591px"></i><i class="cell g" style="left:663px;top:591px"></i><i class="cell g" style="left:683px;top:591px"></i><i class="cell g" style="left:703px;top:591px"></i><i class="cell r" style="left:723px;top:591px"></i><i class="cell r" style="left:743px;top:591px"></i><i class="cell r" style="left:763px;top:591px"></i><i class="cell r" style="left:783px;top:591px"></i><i class="cell g" style="left:803px;top:591px"></i><i class="cell g" style="left:823px;top:591px"></i><i class="cell g" style="left:843px;top:591px"></i><i class="cell g" style="left:863px;top:591px"></i><i class="cell g" style="left:883px;top:591px"></i><i class="cell g" style="left:903px;top:591px"></i><i class="cell g" style="left:923px;top:591px"></i><i class="cell g" style="left:943px;top:591px"></i>
<i class="cell g" style="left:323px;top:611px"></i><i class="cell g" style="left:343px;top:611px"></i><i class="cell g" style="left:363px;top:611px"></i><i class="cell g" style="left:383px;top:611px"></i><i class="cell g" style="left:403px;top:611px"></i><i class="cell g" style="left:423px;top:611px"></i><i class="cell g" style="left:443px;top:611px"></i><i class="cell g" style="left:463px;top:611px"></i><i class="cell g" style="left:483px;top:611px"></i><i class="cell g" style="left:503px;top:611px"></i><i class="cell g" style="left:523px;top:611px"></i><i class="cell g" style="left:543px;top:611px"></i><i class="cell g" style="left:563px;top:611px"></i><i class="cell g" style="left:583px;top:611px"></i><i class="cell g" style="left:603px;top:611px"></i><i class="cell g" style="left:623px;top:611px"></i><i class="cell g" style="left:643px;top:611px"></i><i class="cell g" style="left:663px;top:611px"></i><i class="cell g" style="left:683px;top:611px"></i><i class="cell g" style="left:703px;top:611px"></i><i class="cell g" style="left:723px;top:611px"></i><i class="cell g" style="left:743px;top:611px"></i><i class="cell g" style="left:763px;top:611px"></i><i class="cell g" style="left:783px;top:611px"></i><i class="cell r" style="left:803px;top:611px"></i><i class="cell r" style="left:823px;top:611px"></i><i class="cell r" style="left:843px;top:611px"></i><i class="cell r" style="left:863px;top:611px"></i><i class="cell g" style="left:883px;top:611px"></i><i class="cell g" style="left:903px;top:611px"></i><i class="cell g" style="left:923px;top:611px"></i><i class="cell g" style="left:943px;top:611px"></i>
<i class="cell g" style="left:323px;top:631px"></i><i class="cell g" style="left:343px;top:631px"></i><i class="cell g" style="left:363px;top:631px"></i><i class="cell g" style="left:383px;top:631px"></i><i class="cell g" style="left:403px;top:631px"></i><i class="cell g" style="left:423px;top:631px"></i><i class="cell g" style="left:443px;top:631px"></i><i class="cell g" style="left:463px;top:631px"></i><i class="cell g" style="left:483px;top:631px"></i><i class="cell g" style="left:503px;top:631px"></i><i class="cell g" style="left:523px;top:631px"></i><i class="cell g" style="left:543px;top:631px"></i><i class="cell g" style="left:563px;top:631px"></i><i class="cell g" style="left:583px;top:631px"></i><i class="cell g" style="left:603px;top:631px"></i><i class="cell g" style="left:623px;top:631px"></i><i class="cell g" style="left:643px;top:631px"></i><i class="cell g" style="left:663px;top:631px"></i><i class="cell g" style="left:683px;top:631px"></i><i class="cell g" style="left:703px;top:631px"></i><i class="cell g" style="left:723px;top:631px"></i><i class="cell g" style="left:743px;top:631px"></i><i class="cell g" style="left:763px;top:631px"></i><i class="cell g" style="left:783px;top:631px"></i><i class="cell g" style="left:803px;top:631px"></i><i class="cell g" style="left:823px;top:631px"></i><i class="cell g" style="left:843px;top:631px"></i><i class="cell g" style="left:863px;top:631px"></i><i class="cell r" style="left:883px;top:631px"></i><i class="cell r" style="left:903px;top:631px"></i><i class="cell r" style="left:923px;top:631px"></i><i class="cell r" style="left:943px;top:631px"></i>
<div class="a " style="left:1019px;top:492px;width:139px;height:168px;background:#ffb3e0;border:1px solid;border-color:#4a4a58 #e8d0e0 #e8d0e0 #4a4a58;border-left-width:2px;border-top-width:2px"></div>
<div class="t " style="left:1025.0px;top:519.9px;font-size:12.5px;font-weight:bold;-webkit-text-stroke:.3px;color:#000;transform:scaleX(0.929);transform-origin:0 0;">Settings for Test Pulse</div>
<div class="t " style="left:1068.0px;top:544.9px;font-size:13px;color:#000;transform:scaleX(0.926);transform-origin:0 0;">vinTH(mV)</div>
<svg class="a" style="left:1061.5px;top:562.5px" width="7" height="20" viewBox="0 0 7 20"><rect x="0" y="0" width="7" height="20" fill="#c4c4c4"/><path d="M0 20V0H7" stroke="#ececec" fill="none"/><path d="M7 0V20H0" stroke="#7a7a7a" fill="none"/><path d="M0 9.5H7" stroke="#8a8a8a" stroke-width="1"/><path d="M0 10.5H7" stroke="#e8e8e8" stroke-width="1"/><path d="M3.500 2.500L6.300 6.300H0.700z" fill="#000"/><path d="M3.500 17.5L6.300 13.7H0.700z" fill="#000"/></svg>
<div class="a sunk" style="left:1069px;top:562.5px;width:49px;height:20px;background:#b6b6b6;"></div>
<div class="t " style="left:1072.5px;top:565.8px;font-size:13px;color:#000;transform:scaleX(0.830);transform-origin:0 0;">215</div>
<div class="t " style="left:1055.0px;top:589.9px;font-size:13px;color:#000;transform:scaleX(0.939);transform-origin:0 0;">vinMON(mV)</div>
<svg class="a" style="left:1062.5px;top:608px" width="7" height="20" viewBox="0 0 7 20"><rect x="0" y="0" width="7" height="20" fill="#c4c4c4"/><path d="M0 20V0H7" stroke="#ececec" fill="none"/><path d="M7 0V20H0" stroke="#7a7a7a" fill="none"/><path d="M0 9.5H7" stroke="#8a8a8a" stroke-width="1"/><path d="M0 10.5H7" stroke="#e8e8e8" stroke-width="1"/><path d="M3.500 2.500L6.300 6.300H0.700z" fill="#000"/><path d="M3.500 17.5L6.300 13.7H0.700z" fill="#000"/></svg>
<div class="a sunk" style="left:1070px;top:608px;width:49px;height:20px;background:#b6b6b6;"></div>
<div class="t " style="left:1073.5px;top:611.3px;font-size:13px;color:#000;transform:scaleX(0.864);transform-origin:0 0;">3500</div>
<div class="t " style="left:171.0px;top:687.6px;font-size:13px;font-weight:bold;-webkit-text-stroke:.3px;color:#000;transform:scaleX(0.926);transform-origin:0 0;">DELAY_BOARD</div>
<div class="a sunk" style="left:194px;top:705.5px;width:50px;height:22px;background:#b0b0b0"></div>
<div class="t " style="left:197.0px;top:711.1px;font-size:13px;font-weight:bold;-webkit-text-stroke:.3px;color:#000;transform:scaleX(0.984);transform-origin:0 0;">10.20</div>
<div class="t " style="left:793.5px;top:687.6px;font-size:13px;font-weight:bold;-webkit-text-stroke:.3px;color:#000;transform:scaleX(0.923);transform-origin:0 0;">PW_BOARD</div>
<div class="a sunk" style="left:799px;top:705.5px;width:50px;height:22px;background:#b0b0b0"></div>
<div class="t " style="left:802.0px;top:711.1px;font-size:13px;font-weight:bold;-webkit-text-stroke:.3px;color:#000;transform:scaleX(0.988);transform-origin:0 0;">0.00</div>
<div class="t " style="left:308.0px;top:686.1px;font-size:13px;font-weight:bold;-webkit-text-stroke:.3px;color:#000;transform:scaleX(0.935);transform-origin:0 0;">DT_BOARD</div>
<div class="a " style="left:323px;top:702px;width:50px;height:22px;background:#d6d6d6;border:1px solid;border-color:#f4f4f4 #d0d0d0 #c0c0c0 #f4f4f4;border-bottom-width:2px"></div>
<div class="t " style="left:329.0px;top:708.1px;font-size:13px;font-weight:bold;-webkit-text-stroke:.3px;color:#000;transform:scaleX(0.988);transform-origin:0 0;">1.89</div>
<div class="t " style="left:443.7px;top:686.1px;font-size:13px;font-weight:bold;-webkit-text-stroke:.3px;color:#000;transform:scaleX(0.974);transform-origin:0 0;">TimeCode</div>
<div class="a " style="left:442px;top:702px;width:50px;height:22px;background:#d6d6d6;border:1px solid;border-color:#f4f4f4 #d0d0d0 #c0c0c0 #f4f4f4;border-bottom-width:2px"></div>
<div class="t " style="left:448.0px;top:708.1px;font-size:13px;font-weight:bold;-webkit-text-stroke:.3px;color:#000;transform:scaleX(0.968);transform-origin:0 0;">0</div>
<div class="t " style="left:904.7px;top:685.6px;font-size:13px;font-weight:bold;-webkit-text-stroke:.3px;color:#000;transform:scaleX(0.945);transform-origin:0 0;">DT_PWBOARD</div>
<div class="a " style="left:904px;top:702px;width:50px;height:22px;background:#d6d6d6;border:1px solid;border-color:#f4f4f4 #d0d0d0 #c0c0c0 #f4f4f4;border-bottom-width:2px"></div>
<div class="t " style="left:910.0px;top:708.1px;font-size:13px;font-weight:bold;-webkit-text-stroke:.3px;color:#000;transform:scaleX(0.988);transform-origin:0 0;">0.00</div>
<div class="t " style="left:195.7px;top:790.6px;font-size:12.5px;font-weight:bold;-webkit-text-stroke:.3px;color:#000;transform:scaleX(0.922);transform-origin:0 0;">MeanDelChip</div>
<div class="a " style="left:194px;top:805px;width:440px;height:108px;background:#999;background-clip:padding-box;border:4px solid;border-color:rgba(255,255,255,.62) rgba(255,255,255,.12) rgba(255,255,255,.12) rgba(255,255,255,.62)"></div>
<div class="t " style="left:157.0px;top:820.3px;font-size:13px;font-weight:bold;-webkit-text-stroke:.3px;color:#000;transform:scaleX(0.858);transform-origin:0 0;">Chip0</div>
<i class="acell" style="left:198px;top:809px"></i>
<div class="t " style="left:203.7px;top:815.5px;font-size:12px;color:#000;transform:scaleX(0.890);transform-origin:0 0;">10.39</div>
<i class="acell" style="left:252px;top:809px"></i>
<div class="t " style="left:257.7px;top:815.5px;font-size:12px;color:#000;transform:scaleX(0.890);transform-origin:0 0;">9.26</div>
<i class="acell" style="left:306px;top:809px"></i>
<div class="t " style="left:311.7px;top:815.5px;font-size:12px;color:#000;transform:scaleX(0.890);transform-origin:0 0;">10.18</div>
<i class="acell" style="left:360px;top:809px"></i>
<div class="t " style="left:365.7px;top:815.5px;font-size:12px;color:#000;transform:scaleX(0.890);transform-origin:0 0;">9.89</div>
<i class="acell" style="left:414px;top:809px"></i>
<div class="t " style="left:419.7px;top:815.5px;font-size:12px;color:#000;transform:scaleX(0.890);transform-origin:0 0;">10.20</div>
<i class="acell" style="left:468px;top:809px"></i>
<div class="t " style="left:473.7px;top:815.5px;font-size:12px;color:#000;transform:scaleX(0.890);transform-origin:0 0;">11.15</div>
<i class="acell" style="left:522px;top:809px"></i>
<div class="t " style="left:527.7px;top:815.5px;font-size:12px;color:#000;transform:scaleX(0.890);transform-origin:0 0;">10.27</div>
<i class="acell" style="left:576px;top:809px"></i>
<div class="t " style="left:581.7px;top:815.5px;font-size:12px;color:#000;transform:scaleX(0.890);transform-origin:0 0;">10.08</div>
<div class="t " style="left:157.0px;top:845.6px;font-size:13px;font-weight:bold;-webkit-text-stroke:.3px;color:#000;transform:scaleX(0.858);transform-origin:0 0;">Chip1</div>
<i class="acell" style="left:198px;top:834px"></i>
<div class="t " style="left:203.7px;top:840.5px;font-size:12px;color:#000;transform:scaleX(0.890);transform-origin:0 0;">10.03</div>
<i class="acell" style="left:252px;top:834px"></i>
<div class="t " style="left:257.7px;top:840.5px;font-size:12px;color:#000;transform:scaleX(0.890);transform-origin:0 0;">10.09</div>
<i class="acell" style="left:306px;top:834px"></i>
<div class="t " style="left:311.7px;top:840.5px;font-size:12px;color:#000;transform:scaleX(0.890);transform-origin:0 0;">10.12</div>
<i class="acell" style="left:360px;top:834px"></i>
<div class="t " style="left:365.7px;top:840.5px;font-size:12px;color:#000;transform:scaleX(0.890);transform-origin:0 0;">9.96</div>
<i class="acell" style="left:414px;top:834px"></i>
<div class="t " style="left:419.7px;top:840.5px;font-size:12px;color:#000;transform:scaleX(0.890);transform-origin:0 0;">9.99</div>
<i class="acell" style="left:468px;top:834px"></i>
<div class="t " style="left:473.7px;top:840.5px;font-size:12px;color:#000;transform:scaleX(0.890);transform-origin:0 0;">10.20</div>
<i class="acell" style="left:522px;top:834px"></i>
<div class="t " style="left:527.7px;top:840.5px;font-size:12px;color:#000;transform:scaleX(0.890);transform-origin:0 0;">10.22</div>
<i class="acell" style="left:576px;top:834px"></i>
<div class="t " style="left:581.7px;top:840.5px;font-size:12px;color:#000;transform:scaleX(0.890);transform-origin:0 0;">10.26</div>
<div class="t " style="left:157.0px;top:868.1px;font-size:13px;font-weight:bold;-webkit-text-stroke:.3px;color:#000;transform:scaleX(0.858);transform-origin:0 0;">Chip2</div>
<i class="acell" style="left:198px;top:859px"></i>
<div class="t " style="left:203.7px;top:865.5px;font-size:12px;color:#000;transform:scaleX(0.890);transform-origin:0 0;">10.39</div>
<i class="acell" style="left:252px;top:859px"></i>
<div class="t " style="left:257.7px;top:865.5px;font-size:12px;color:#000;transform:scaleX(0.890);transform-origin:0 0;">10.37</div>
<i class="acell" style="left:306px;top:859px"></i>
<div class="t " style="left:311.7px;top:865.5px;font-size:12px;color:#000;transform:scaleX(0.890);transform-origin:0 0;">10.38</div>
<i class="acell" style="left:360px;top:859px"></i>
<div class="t " style="left:365.7px;top:865.5px;font-size:12px;color:#000;transform:scaleX(0.890);transform-origin:0 0;">10.27</div>
<i class="acell" style="left:414px;top:859px"></i>
<div class="t " style="left:419.7px;top:865.5px;font-size:12px;color:#000;transform:scaleX(0.890);transform-origin:0 0;">10.33</div>
<i class="acell" style="left:468px;top:859px"></i>
<div class="t " style="left:473.7px;top:865.5px;font-size:12px;color:#000;transform:scaleX(0.890);transform-origin:0 0;">10.45</div>
<i class="acell" style="left:522px;top:859px"></i>
<div class="t " style="left:527.7px;top:865.5px;font-size:12px;color:#000;transform:scaleX(0.890);transform-origin:0 0;">10.45</div>
<i class="acell" style="left:576px;top:859px"></i>
<div class="t " style="left:581.7px;top:865.5px;font-size:12px;color:#000;transform:scaleX(0.890);transform-origin:0 0;">10.57</div>
<div class="t " style="left:157.0px;top:891.1px;font-size:13px;font-weight:bold;-webkit-text-stroke:.3px;color:#000;transform:scaleX(0.858);transform-origin:0 0;">Chip3</div>
<i class="acell" style="left:198px;top:884px"></i>
<div class="t " style="left:203.7px;top:890.5px;font-size:12px;color:#000;transform:scaleX(0.890);transform-origin:0 0;">10.15</div>
<i class="acell" style="left:252px;top:884px"></i>
<div class="t " style="left:257.7px;top:890.5px;font-size:12px;color:#000;transform:scaleX(0.890);transform-origin:0 0;">10.44</div>
<i class="acell" style="left:306px;top:884px"></i>
<div class="t " style="left:311.7px;top:890.5px;font-size:12px;color:#000;transform:scaleX(0.890);transform-origin:0 0;">10.26</div>
<i class="acell" style="left:360px;top:884px"></i>
<div class="t " style="left:365.7px;top:890.5px;font-size:12px;color:#000;transform:scaleX(0.890);transform-origin:0 0;">10.44</div>
<i class="acell" style="left:414px;top:884px"></i>
<div class="t " style="left:419.7px;top:890.5px;font-size:12px;color:#000;transform:scaleX(0.890);transform-origin:0 0;">10.53</div>
<i class="acell" style="left:468px;top:884px"></i>
<div class="t " style="left:473.7px;top:890.5px;font-size:12px;color:#000;transform:scaleX(0.890);transform-origin:0 0;">10.61</div>
<i class="acell" style="left:522px;top:884px"></i>
<div class="t " style="left:527.7px;top:890.5px;font-size:12px;color:#000;transform:scaleX(0.890);transform-origin:0 0;">10.56</div>
<i class="acell" style="left:576px;top:884px"></i>
<div class="t " style="left:581.7px;top:890.5px;font-size:12px;color:#000;transform:scaleX(0.890);transform-origin:0 0;">11.09</div>
<div class="t " style="left:699.5px;top:792.6px;font-size:12.5px;font-weight:bold;-webkit-text-stroke:.3px;color:#000;transform:scaleX(0.914);transform-origin:0 0;">MeanPWChip</div>
<div class="a " style="left:698px;top:807px;width:440px;height:108px;background:#999;background-clip:padding-box;border:4px solid;border-color:rgba(255,255,255,.62) rgba(255,255,255,.12) rgba(255,255,255,.12) rgba(255,255,255,.62)"></div>
<div class="t " style="left:661.0px;top:818.1px;font-size:13px;font-weight:bold;-webkit-text-stroke:.3px;color:#000;transform:scaleX(0.858);transform-origin:0 0;">Chip0</div>
<i class="acell" style="left:702px;top:811px"></i>
<div class="t " style="left:707.7px;top:817.5px;font-size:12px;color:#000;transform:scaleX(0.890);transform-origin:0 0;">92.65</div>
<i class="acell" style="left:756px;top:811px"></i>
<div class="t " style="left:761.7px;top:817.5px;font-size:12px;color:#000;transform:scaleX(0.890);transform-origin:0 0;">99.57</div>
<i class="acell" style="left:810px;top:811px"></i>
<div class="t " style="left:815.7px;top:817.5px;font-size:12px;color:#000;transform:scaleX(0.890);transform-origin:0 0;">98.59</div>
<i class="acell" style="left:864px;top:811px"></i>
<div class="t " style="left:869.7px;top:817.5px;font-size:12px;color:#000;transform:scaleX(0.890);transform-origin:0 0;">96.87</div>
<i class="acell" style="left:918px;top:811px"></i>
<div class="t " style="left:923.7px;top:817.5px;font-size:12px;color:#000;transform:scaleX(0.890);transform-origin:0 0;">101.54</div>
<i class="acell" style="left:972px;top:811px"></i>
<div class="t " style="left:977.7px;top:817.5px;font-size:12px;color:#000;transform:scaleX(0.890);transform-origin:0 0;">99.68</div>
<i class="acell" style="left:1026px;top:811px"></i>
<div class="t " style="left:1031.7px;top:817.5px;font-size:12px;color:#000;transform:scaleX(0.890);transform-origin:0 0;">101.11</div>
<i class="acell" style="left:1080px;top:811px"></i>
<div class="t " style="left:1085.7px;top:817.5px;font-size:12px;color:#000;transform:scaleX(0.890);transform-origin:0 0;">101.65</div>
<div class="t " style="left:661.0px;top:843.1px;font-size:13px;font-weight:bold;-webkit-text-stroke:.3px;color:#000;transform:scaleX(0.858);transform-origin:0 0;">Chip1</div>
<i class="acell" style="left:702px;top:836px"></i>
<div class="t " style="left:707.7px;top:842.5px;font-size:12px;color:#000;transform:scaleX(0.890);transform-origin:0 0;">96.43</div>
<i class="acell" style="left:756px;top:836px"></i>
<div class="t " style="left:761.7px;top:842.5px;font-size:12px;color:#000;transform:scaleX(0.890);transform-origin:0 0;">96.29</div>
<i class="acell" style="left:810px;top:836px"></i>
<div class="t " style="left:815.7px;top:842.5px;font-size:12px;color:#000;transform:scaleX(0.890);transform-origin:0 0;">99.43</div>
<i class="acell" style="left:864px;top:836px"></i>
<div class="t " style="left:869.7px;top:842.5px;font-size:12px;color:#000;transform:scaleX(0.890);transform-origin:0 0;">95.44</div>
<i class="acell" style="left:918px;top:836px"></i>
<div class="t " style="left:923.7px;top:842.5px;font-size:12px;color:#000;transform:scaleX(0.890);transform-origin:0 0;">101.28</div>
<i class="acell" style="left:972px;top:836px"></i>
<div class="t " style="left:977.7px;top:842.5px;font-size:12px;color:#000;transform:scaleX(0.890);transform-origin:0 0;">95.94</div>
<i class="acell" style="left:1026px;top:836px"></i>
<div class="t " style="left:1031.7px;top:842.5px;font-size:12px;color:#000;transform:scaleX(0.890);transform-origin:0 0;">97.75</div>
<i class="acell" style="left:1080px;top:836px"></i>
<div class="t " style="left:1085.7px;top:842.5px;font-size:12px;color:#000;transform:scaleX(0.890);transform-origin:0 0;">96.33</div>
<div class="t " style="left:661.0px;top:866.1px;font-size:13px;font-weight:bold;-webkit-text-stroke:.3px;color:#000;transform:scaleX(0.858);transform-origin:0 0;">Chip2</div>
<i class="acell" style="left:702px;top:861px"></i>
<div class="t " style="left:707.7px;top:867.5px;font-size:12px;color:#000;transform:scaleX(0.890);transform-origin:0 0;">100.68</div>
<i class="acell" style="left:756px;top:861px"></i>
<div class="t " style="left:761.7px;top:867.5px;font-size:12px;color:#000;transform:scaleX(0.890);transform-origin:0 0;">99.65</div>
<i class="acell" style="left:810px;top:861px"></i>
<div class="t " style="left:815.7px;top:867.5px;font-size:12px;color:#000;transform:scaleX(0.890);transform-origin:0 0;">98.64</div>
<i class="acell" style="left:864px;top:861px"></i>
<div class="t " style="left:869.7px;top:867.5px;font-size:12px;color:#000;transform:scaleX(0.890);transform-origin:0 0;">94.96</div>
<i class="acell" style="left:918px;top:861px"></i>
<div class="t " style="left:923.7px;top:867.5px;font-size:12px;color:#000;transform:scaleX(0.890);transform-origin:0 0;">100.31</div>
<i class="acell" style="left:972px;top:861px"></i>
<div class="t " style="left:977.7px;top:867.5px;font-size:12px;color:#000;transform:scaleX(0.890);transform-origin:0 0;">101.06</div>
<i class="acell" style="left:1026px;top:861px"></i>
<div class="t " style="left:1031.7px;top:867.5px;font-size:12px;color:#000;transform:scaleX(0.890);transform-origin:0 0;">70.06</div>
<i class="acell" style="left:1080px;top:861px"></i>
<div class="t " style="left:1085.7px;top:867.5px;font-size:12px;color:#000;transform:scaleX(0.890);transform-origin:0 0;">92.32</div>
<div class="t " style="left:661.0px;top:889.1px;font-size:13px;font-weight:bold;-webkit-text-stroke:.3px;color:#000;transform:scaleX(0.858);transform-origin:0 0;">Chip3</div>
<i class="acell" style="left:702px;top:886px"></i>
<div class="t " style="left:707.7px;top:892.5px;font-size:12px;color:#000;transform:scaleX(0.890);transform-origin:0 0;">97.36</div>
<i class="acell" style="left:756px;top:886px"></i>
<div class="t " style="left:761.7px;top:892.5px;font-size:12px;color:#000;transform:scaleX(0.890);transform-origin:0 0;">105.89</div>
<i class="acell" style="left:810px;top:886px"></i>
<div class="t " style="left:815.7px;top:892.5px;font-size:12px;color:#000;transform:scaleX(0.890);transform-origin:0 0;">99.48</div>
<i class="acell" style="left:864px;top:886px"></i>
<div class="t " style="left:869.7px;top:892.5px;font-size:12px;color:#000;transform:scaleX(0.890);transform-origin:0 0;">101.85</div>
<i class="acell" style="left:918px;top:886px"></i>
<div class="t " style="left:923.7px;top:892.5px;font-size:12px;color:#000;transform:scaleX(0.890);transform-origin:0 0;">103.05</div>
<i class="acell" style="left:972px;top:886px"></i>
<div class="t " style="left:977.7px;top:892.5px;font-size:12px;color:#000;transform:scaleX(0.890);transform-origin:0 0;">102.50</div>
<i class="acell" style="left:1026px;top:886px"></i>
<div class="t " style="left:1031.7px;top:892.5px;font-size:12px;color:#000;transform:scaleX(0.890);transform-origin:0 0;">100.85</div>
<i class="acell" style="left:1080px;top:886px"></i>
<div class="t " style="left:1085.7px;top:892.5px;font-size:12px;color:#000;transform:scaleX(0.890);transform-origin:0 0;">102.12</div>
<div class="t " style="left:194.5px;top:917.4px;font-size:13px;color:#000;transform:scaleX(0.892);transform-origin:0 0;">meandel</div>
<div class="a sunk" style="left:192.5px;top:934.5px;width:49.5px;height:20px;background:#b6b6b6"></div>
<div class="t " style="left:195.0px;top:938.6px;font-size:13px;color:#000;transform:scaleX(0.891);transform-origin:0 0;">10.30</div>
<div class="a " style="left:1261px;top:70px;width:17px;height:895px;background:#f0f0f0;border-left:1px solid #e4e4e4"></div>
<div class="a" style="left:1266px;top:76px;border:4px solid transparent;border-top:0;border-bottom:4px solid #555"></div>
<div class="a" style="left:1266px;top:955px;border:4px solid transparent;border-bottom:0;border-top:4px solid #444"></div>
<div class="a " style="left:1263px;top:392px;width:14px;height:446px;background:linear-gradient(90deg,#f6f6f6 0%,#e6e6e6 45%,#d2d2d4 55%,#dcdcde 100%);border:1px solid #9a9a9a;border-radius:2px"></div>
<div class="a " style="left:1266px;top:612px;width:8px;height:1px;background:#555"></div>
<div class="a " style="left:1266px;top:614px;width:8px;height:1px;background:#555"></div>
<div class="a " style="left:1266px;top:616px;width:8px;height:1px;background:#555"></div>
<div class="a " style="left:2px;top:965px;width:1259px;height:17px;background:#f0f0f0;border-top:1px solid #e4e4e4"></div>
<div class="a " style="left:1261px;top:965px;width:17px;height:17px;background:#f0f0f0"></div>
<div class="a" style="left:7px;top:969px;border:4px solid transparent;border-left:0;border-right:4px solid #444"></div>
<div class="a" style="left:1250px;top:969px;border:4px solid transparent;border-right:0;border-left:4px solid #444"></div>
<div class="a " style="left:453px;top:967px;width:668px;height:14px;background:linear-gradient(180deg,#f6f6f6 0%,#e6e6e6 45%,#d2d2d4 55%,#dcdcde 100%);border:1px solid #9a9a9a;border-radius:2px"></div>
<div class="a " style="left:783px;top:970px;width:1px;height:8px;background:#555"></div>
<div class="a " style="left:785px;top:970px;width:1px;height:8px;background:#555"></div>
<div class="a " style="left:787px;top:970px;width:1px;height:8px;background:#555"></div>
<div class="a " style="left:0px;top:982px;width:1280px;height:3px;background:linear-gradient(180deg,#35505f 0,#35505f 1px,#86b4cc 1px,#6a9cba 100%)"></div>
<div class="a " style="left:0px;top:984px;width:1280px;height:40px;background:linear-gradient(180deg,#4f8eb6 0%,#317aa8 7%,#2c719f 45%,#296a98 55%,#286390 100%);border-top:1px solid #3a6f92"></div>
<div class="a " style="left:0px;top:985px;width:1280px;height:39px;background:linear-gradient(90deg,rgba(20,60,110,0) 0%,rgba(20,60,110,0) 30%,rgba(16,56,112,.5) 70%,rgba(12,50,108,.66) 100%)"></div>
<div class="a " style="left:1000px;top:985px;width:60px;height:39px;background:linear-gradient(90deg,rgba(255,255,255,0),rgba(255,255,255,.16) 50%,rgba(255,255,255,0));transform:skewX(-28deg)"></div>
<div class="a" style="left:7px;top:984px;width:40px;height:40px;border-radius:50%;background:radial-gradient(circle at 50% 35%,#7fc4ee 0%,#2f7fc0 45%,#0f3f78 80%,#0a2a55 100%);border:1px solid #a8c8e8;box-shadow:0 0 3px #cfe4f8"></div>
<svg class="a" style="left:14px;top:991px" width="26" height="26" viewBox="0 0 26 26"><path d="M3 7c3-2 6-2 9 0l-1.500 5.500c-3-2-6-2-9 0z" fill="#e8542a"/><path d="M13.500 7.500c3 2 6 2 9 0L21 13c-3 2-6 2-9 0z" fill="#8cc63f"/><path d="M1 14c3-2 6-2 9 0l-1.500 5.500c-3-2-6-2-9 0z" fill="#3a9ae0"/><path d="M11.500 14.500c3 2 6 2 9 0L19 20c-3 2-6 2-9 0z" fill="#f8c81c"/></svg>
<div class="a " style="left:60px;top:985px;width:90px;height:38px;background:linear-gradient(180deg,rgba(255,255,255,.28) 0%,rgba(255,255,255,.14) 45%,rgba(255,255,255,.04) 55%,rgba(255,255,255,.1) 100%);border:1px solid rgba(20,40,70,.75);border-radius:3px;box-shadow:inset 0 0 0 1px rgba(255,255,255,.4)"></div>
<div class="a" style="left:67px;top:989px;width:30px;height:30px;border-radius:50%;background:radial-gradient(circle at 70% 40%,#ffd23a 0%,#ffb01a 30%,#ff8a12 55%,#e8560c 80%,#c43c08 100%)"></div>
<div class="a" style="left:74px;top:990px;width:19px;height:19px;border-radius:50%;background:radial-gradient(circle at 45% 35%,#4aa0e8 0%,#1f62c0 55%,#163f8c 100%)"></div>
<svg class="a" style="left:67px;top:989px" width="30" height="30" viewBox="0 0 30 30"><path d="M3 8c2-1 4 0 6 2 1 2 3 3 5 3-2 1-2 3 0 4 3 1 6 0 8-2-1 5-5 8-10 8C5 23 1 17 3 8z" fill="#f2701a"/></svg>
<div class="t " style="left:102.5px;top:997.5px;font-size:12.5px;color:#fff;transform:scaleX(0.948);transform-origin:0 0;">Muha...</div>
<div class="t" style="left:163px;top:983.500px;font-family:'Liberation Serif',serif;font-weight:bold;font-size:35px;color:#00ffff;-webkit-text-stroke:1.100px #000;transform:scaleX(1.180);transform-origin:0 0">P</div>
<div class="t" style="left:174px;top:991px;font-family:'Liberation Serif',serif;font-weight:bold;font-size:35px;color:#00ffff;-webkit-text-stroke:1.100px #000;transform:scaleX(.95);transform-origin:0 0">L</div>
<svg class="a" style="left:218px;top:986px" width="36" height="36" viewBox="0 0 36 36"><path d="M4 17c-1-4 3-6 6-5 1-4 5-5 8-4 2-5 11-5 12 1 3 1 3 6 0 8z" fill="#a9a9a9"/><path d="M1 17.500h30" stroke="#111" stroke-width="1.600"/><path d="M3 19h26v14H5z" fill="#9fb6c8" opacity=".5"/><path d="M4 21l-1.500 2.500M8 21l-1.500 2.500M12 21l-1.500 2.500M24 21l-1.500 2.500M28 21l-1.500 2.500M5 25l-1.500 2.500M9 25l-1.500 2.500M13 25l-1.500 2.500M23 25l-1.500 2.500M27 25l-1.500 2.500M6 29l-1.500 2.500M10 29l-1.500 2.500M22 29l-1.500 2.500M26 29l-1.500 2.500" stroke="#c8d8e4" stroke-width="1.200"/><path d="M19 17l-5 9h3l-4 8 8-11h-3l4-6z" fill="#ffe81a" stroke="#222" stroke-width=".8"/></svg>
<div class="a " style="left:264px;top:985px;width:90px;height:38px;background:linear-gradient(180deg,rgba(255,255,255,.72) 0%,rgba(230,242,252,.62) 45%,rgba(190,220,245,.48) 55%,rgba(190,222,248,.5) 100%);border:1px solid rgba(20,40,70,.75);border-radius:3px;box-shadow:inset 0 0 0 1px rgba(255,255,255,.4)"></div>
<svg class="a" style="left:269px;top:987px" width="34" height="30" viewBox="0 0 34 30"><rect x="4" y="1.500" width="26" height="27" fill="#0c0c0c"/><rect x="4" y="1.500" width="26" height="3.200" fill="#b8b8b8"/><rect x="4" y="25.300" width="26" height="3.200" fill="#b8b8b8"/><path d="M5 3.100h24M5 26.900h24" stroke="#444" stroke-width="1.600" stroke-dasharray="2 1.700"/><path d="M5 14c1-8 3-8 4 0s3 8 4 0" stroke="#3a9a5a" stroke-width="1.200" fill="none"/><path d="M17 18c1 8 3 8 4-3s3-11 4 0 3 11 4 0" stroke="#3a9a5a" stroke-width="1.200" fill="none"/><path d="M10.500 6.700L25.400 14.500 10.500 22.300z" fill="#ffd21a" stroke="#c89a00" stroke-width=".6"/><path d="M13 14.500h5M15.500 12v5" stroke="#000" stroke-width="1.300"/><path d="M1 10.200h8M26 14.500h7" stroke="#e05050" stroke-width="1.200"/><path d="M1 18h8" stroke="#3a6ec8" stroke-width="1.200"/></svg>
<div class="t " style="left:306.5px;top:997.5px;font-size:12.5px;color:#fff;transform:scaleX(0.908);transform-origin:0 0;">feb_te...</div>
<div class="a " style="left:358px;top:985px;width:90px;height:38px;background:linear-gradient(180deg,rgba(255,255,255,.28) 0%,rgba(255,255,255,.14) 45%,rgba(255,255,255,.04) 55%,rgba(255,255,255,.1) 100%);border:1px solid rgba(20,40,70,.75);border-radius:3px;box-shadow:inset 0 0 0 1px rgba(255,255,255,.4)"></div>
<div class="a " style="left:364px;top:988px;width:32px;height:32px;background:#fff"></div>
<svg class="a" style="left:364px;top:988px" width="32" height="32" viewBox="0 0 32 32"><path d="M3 6c4-5 12-6 16-3 5-2 11 1 11 5v5H3z" fill="#b8b8b8"/><path d="M1 11h30v7c-4 3-8-2-12 1-4 2-9-2-13 0-2 1-4 0-5-1z" fill="#111"/><path d="M4 21h1v1H4zM8 23h1v1H8zM6 26h1v1H6zM11 21h1v1h-1zM22 22h1v1h-1zM25 25h1v1h-1zM20 27h1v1h-1zM27 21h1v1h-1zM10 28h1v1h-1zM23 29h1v1h-1zM5 29h1v1H5zM18 23h1v1h-1z" fill="#2233cc"/><path d="M16 17l-4 7h3l-4 7 8-9h-3l3-5z" fill="#1a2ae0"/></svg>
<div class="t " style="left:406.5px;top:997.5px;font-size:12.5px;color:#fff;transform:scaleX(0.988);transform-origin:0 0;">N,,--</div>
<div class="a " style="left:452px;top:985px;width:90px;height:38px;background:linear-gradient(180deg,rgba(255,255,255,.28) 0%,rgba(255,255,255,.14) 45%,rgba(255,255,255,.04) 55%,rgba(255,255,255,.1) 100%);border:1px solid rgba(20,40,70,.75);border-radius:3px;box-shadow:inset 0 0 0 1px rgba(255,255,255,.4)"></div>
<div class="a" style="left:459px;top:988px;width:29px;height:29px;border-radius:46%;background:#12a5e8"></div>
<div class="t b" style="left:464px;top:989px;font-size:26px;color:#fff">S</div>
<div class="a" style="left:476px;top:1005px;width:12px;height:12px;border-radius:50%;background:#fff;border:1.500px solid #7fba00"></div>
<div class="t " style="left:494.0px;top:997.5px;font-size:12.5px;color:#fff;transform:scaleX(0.892);transform-origin:0 0;">Skype</div>
<div class="a " style="left:545px;top:985px;width:181px;height:38px;background:linear-gradient(180deg,rgba(255,255,255,.28) 0%,rgba(255,255,255,.14) 45%,rgba(255,255,255,.04) 55%,rgba(255,255,255,.1) 100%);border:1px solid rgba(20,40,70,.75);border-radius:3px;box-shadow:inset 0 0 0 1px rgba(255,255,255,.4)"></div>
<div class="a " style="left:636px;top:987px;width:1px;height:34px;background:rgba(20,40,70,.35);box-shadow:1px 0 0 rgba(255,255,255,.18)"></div>
<svg class="a" style="left:550px;top:988px" width="32" height="32" viewBox="0 0 32 32"><rect x="14" y="4" width="16" height="23" fill="#fff" stroke="#1e7145" stroke-width="1"/><path d="M18 8h4M24 8h4M18 12h4M24 12h4M18 16h4M24 16h4M18 20h4M24 20h4M18 24h4M24 24h4" stroke="#1e7145" stroke-width="2"/><path d="M1 4l18-3v30L1 28z" fill="#1e7145"/><path d="M6 10l7 12M13 10L6 22" stroke="#fff" stroke-width="2.600"/></svg>
<div class="t " style="left:587.5px;top:997.5px;font-size:12.5px;color:#fff;transform:scaleX(0.930);transform-origin:0 0;">Conn...</div>
<svg class="a" style="left:643px;top:988px" width="32" height="32" viewBox="0 0 32 32"><rect x="14" y="4" width="16" height="23" fill="#fff" stroke="#1e7145" stroke-width="1"/><path d="M18 8h4M24 8h4M18 12h4M24 12h4M18 16h4M24 16h4M18 20h4M24 20h4M18 24h4M24 24h4" stroke="#1e7145" stroke-width="2"/><path d="M1 4l18-3v30L1 28z" fill="#1e7145"/><path d="M6 10l7 12M13 10L6 22" stroke="#fff" stroke-width="2.600"/></svg>
<div class="t " style="left:679.5px;top:997.5px;font-size:12.5px;color:#fff;transform:scaleX(0.782);transform-origin:0 0;">FBEs_...</div>
<div class="a " style="left:730px;top:985px;width:89px;height:38px;background:linear-gradient(180deg,rgba(255,255,255,.28) 0%,rgba(255,255,255,.14) 45%,rgba(255,255,255,.04) 55%,rgba(255,255,255,.1) 100%);border:1px solid rgba(20,40,70,.75);border-radius:3px;box-shadow:inset 0 0 0 1px rgba(255,255,255,.4)"></div>
<svg class="a" style="left:735px;top:986px" width="36" height="36" viewBox="0 0 36 36"><path d="M2 23c0-7 6-12 13-12 6 0 10 3 10 8 0 3-3 3-3 6 0 4-5 7-10 7-6 0-10-4-10-9z" fill="#d3e7f3" stroke="#9fc0d6" stroke-width=".8"/><circle cx="6.500" cy="20.500" r="2" fill="#e34a3a"/><circle cx="11" cy="15" r="2" fill="#5ab83a"/><circle cx="17.500" cy="13.500" r="2" fill="#f4c020"/><circle cx="13" cy="23" r="2.200" fill="#3a6a9a"/><path d="M30 8L18.500 33" stroke="#e8923a" stroke-width="2.600" stroke-linecap="round"/><path d="M28 3l5 2.500-2.500 5-3.500-1.800z" fill="#d8b078" stroke="#9a7040" stroke-width=".6"/></svg>
<div class="t " style="left:771.5px;top:997.5px;font-size:12.5px;color:#fff;transform:scaleX(0.863);transform-origin:0 0;">10072...</div>
<div class="a " style="left:823px;top:985px;width:89px;height:38px;background:linear-gradient(180deg,rgba(255,255,255,.28) 0%,rgba(255,255,255,.14) 45%,rgba(255,255,255,.04) 55%,rgba(255,255,255,.1) 100%);border:1px solid rgba(20,40,70,.75);border-radius:3px;box-shadow:inset 0 0 0 1px rgba(255,255,255,.4)"></div>
<svg class="a" style="left:828px;top:987px" width="30" height="36" viewBox="0 0 30 36"><path d="M10 3l13 3v24l-13 2z" fill="#e8d080" stroke="#b89a40" stroke-width=".7"/><path d="M12 7h11v22H12z" fill="#fff6d0"/><path d="M3 5l8-2.500v26L5 33 3 30z" fill="#f6e6a4" stroke="#c4a850" stroke-width=".7"/><path d="M11 4l1.500 3v24L11 29z" fill="#d8bc68"/><path d="M21.500 22h3v6h-3z" fill="#f0dc90" stroke="#b89a40" stroke-width=".5"/></svg>
<div class="t " style="left:865.5px;top:997.5px;font-size:12.5px;color:#fff;transform:scaleX(0.803);transform-origin:0 0;">FEBs t...</div>
<svg class="a" style="left:920px;top:995px" width="260" height="22" viewBox="0 0 260 22"><path d="M4 8c2-4 8-5 12-2 2 2 2 7-1 9-4 2-9 1-11-2-1-2-1-4 0-5z" fill="#e8ffd0" stroke="#7ab83a" stroke-width="1.500"/><rect x="27" y="4" width="13" height="14" rx="2" fill="#1a8ae0" stroke="#fff" stroke-width="1"/><circle cx="33.500" cy="11" r="5" fill="#fff"/><path d="M30 11h7M31.500 9.500l-1.500 1.500 1.500 1.500M35.500 9.500l1.500 1.500-1.500 1.500" stroke="#1a8ae0" stroke-width="1.200" fill="none"/><rect x="50" y="3" width="15" height="16" fill="#5cb82a" stroke="#e8ffe0" stroke-width="1.500"/><path d="M53 6h9v6c0 3-2 5-4.500 6-2.500-1-4.500-3-4.500-6z" fill="#fff"/><path d="M57.500 6v12M53 11h9" stroke="#5cb82a" stroke-width="1"/><path d="M75 18l4-12 3 6 4-8 2 3-5 12-3-5-2 5z" fill="#e8d020" stroke="#2a6a2a" stroke-width="1"/><path d="M74 4l14 14" stroke="#2a8a2a" stroke-width="1.500"/><path d="M100 5l4-2 3 2 3-2 3 2-3 3 3 2-3 3-3-2-3 2-3-3 3-2z" fill="#e8e8e8" stroke="#666" stroke-width=".8"/><circle cx="111" cy="15" r="4" fill="#d22"/><path d="M109 13l4 4M113 13l-4 4" stroke="#fff" stroke-width="1.200"/><rect x="123" y="4" width="14" height="10" fill="#223" stroke="#ddd" stroke-width="1"/><path d="M125 12l3-5 2 3 2-4 3 6z" fill="#4ad"/><rect x="127" y="15" width="6" height="3" fill="#ccc"/><path d="M146 10l8-6 8 6v8h-16z" fill="#6ac" stroke="#fff" stroke-width="1"/><circle cx="149" cy="14" r="4.500" fill="#d22"/><path d="M147 12l4 4M151 12l-4 4" stroke="#fff" stroke-width="1.300"/><circle cx="178" cy="11" r="7.500" fill="#3aa820" stroke="#dfd" stroke-width="1"/><path d="M174 9a4.500 4.500 0 0 1 8-1l1-2v4h-4l1.500-1M182 13a4.500 4.500 0 0 1-8 1l-1 2v-4h4l-1.500 1" fill="#fff"/><path d="M195 3v16" stroke="#fff" stroke-width="1.500"/><path d="M196 4c3-2 5 1 8-1v7c-3 2-5-1-8 1z" fill="#fff"/><rect x="222" y="6" width="11" height="9" fill="none" stroke="#fff" stroke-width="1.500"/><path d="M224 18h8M228 15v3" stroke="#fff" stroke-width="1.500"/><path d="M217 3v6h4V3M219 9v8h3" stroke="#fff" stroke-width="1.300" fill="none"/><path d="M243 8h3l4-4v14l-4-4h-3z" fill="#fff"/><path d="M253 8c1.500 2 1.500 4 0 6M256 6c2.500 3 2.500 7 0 10" stroke="#fff" stroke-width="1.200" fill="none"/></svg>
<div class="t " style="left:1211.0px;top:990.4px;font-size:12.5px;color:#fff;transform:scaleX(0.890);transform-origin:0 0;">12:11</div>
<div class="t " style="left:1195.5px;top:1006.9px;font-size:12.5px;color:#fff;transform:scaleX(0.927);transform-origin:0 0;">29/09/2015</div>
<div class="a " style="left:1266px;top:985px;width:14px;height:39px;background:linear-gradient(180deg,rgba(255,255,255,.22),rgba(255,255,255,.04));border-left:1px solid #1a3a5a;box-shadow:inset 1px 0 0 rgba(255,255,255,.4)"></div>
</body></html>
